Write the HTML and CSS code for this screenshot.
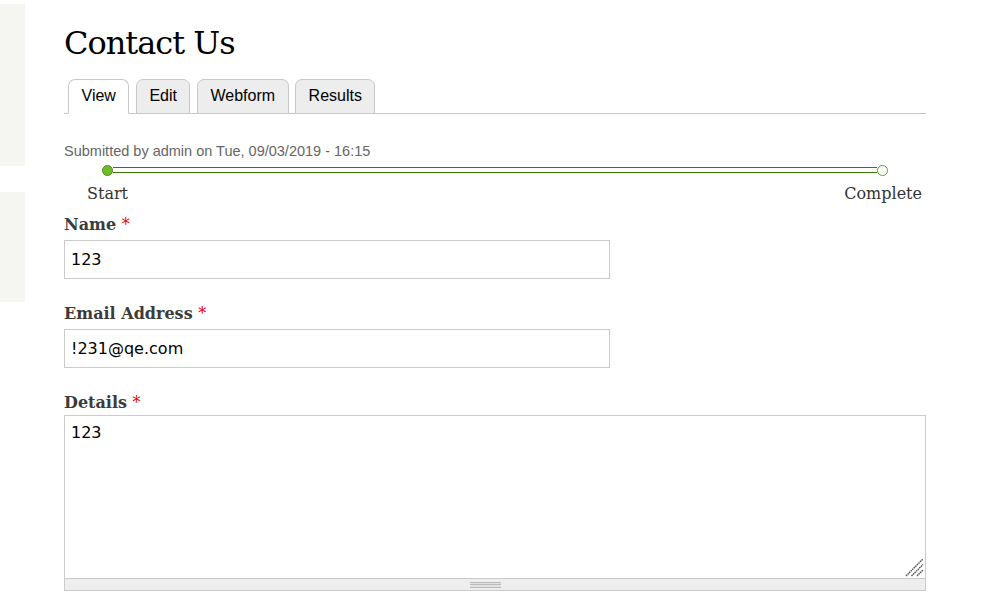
FILE: index.html
```html
<!DOCTYPE html>
<html lang="en">
<head>
<meta charset="utf-8">
<title>Contact Us</title>
<link rel="stylesheet" href="styles.css">
</head>
<body>
<div class="page">
  <aside class="sidebar">
    <div class="side-block side-block--top"></div>
    <div class="side-block side-block--bottom"></div>
  </aside>
  <main class="main">
    <h1 class="title">Contact Us</h1>
    <ul class="tabs">
      <li class="tab tab--active">View</li>
      <li class="tab">Edit</li>
      <li class="tab">Webform</li>
      <li class="tab">Results</li>
    </ul>
    <p class="submitted">Submitted by admin on Tue, 09/03/2019 - 16:15</p>
    <div class="progress">
      <div class="track">
        <span class="dot dot--done"></span>
        <span class="bar"></span>
        <span class="dot"></span>
      </div>
      <div class="steps">
        <span class="step step--start">Start</span>
        <span class="step step--end">Complete</span>
      </div>
    </div>
    <form class="form">
      <div class="field">
        <label class="label">Name <span class="req">*</span></label>
        <div class="input input--short">123</div>
      </div>
      <div class="field">
        <label class="label">Email Address <span class="req">*</span></label>
        <div class="input input--short">!231@qe.com</div>
      </div>
      <div class="field field--textarea">
        <label class="label">Details <span class="req">*</span></label>
        <div class="textarea-wrap">
          <div class="textarea">123
            <svg class="resizer" width="19" height="19" viewBox="0 0 19 19">
              <g stroke="#555" stroke-width="1.4" stroke-dasharray="1.6 0.6">
                <line x1="1" y1="18" x2="18" y2="1"/>
                <line x1="6.5" y1="18" x2="18" y2="6.5"/>
                <line x1="12" y1="18" x2="18" y2="12"/>
              </g>
            </svg>
          </div>
          <div class="grippie"><span class="grip"></span></div>
        </div>
      </div>
    </form>
  </main>
</div>
</body>
</html>
```
FILE: styles.css
```css
* { box-sizing: border-box; }
html, body { margin: 0; padding: 0; background: #fff; }
body { font-family: "DejaVu Serif", Georgia, serif; color: #222; }

.page { display: flex; }

.sidebar {
  width: 25px;
  flex: none;
  padding-top: 4px;
}
.side-block { background: #f5f5f2; }
.side-block--top { height: 162px; }
.side-block--bottom { height: 110px; margin-top: 26px; }

.main {
  margin-left: 39px;
  width: 862px;
}

.title {
  margin: 27px 0 0;
  font-family: "DejaVu Serif", Georgia, serif;
  font-weight: normal;
  font-size: 32px;
  line-height: 33px;
  letter-spacing: -1px;
  color: #000;
}

.tabs {
  list-style: none;
  margin: 19px 0 0;
  padding: 0 0 0 4px;
  display: flex;
  gap: 6.5px;
  height: 35px;
  border-bottom: 1px solid #c8c8c8;
}
.tab {
  height: 35px;
  padding: 0 12.5px;
  border: 1px solid #c8c8c8;
  border-radius: 7px 7px 0 0;
  background: #ededed;
  font-family: "Liberation Sans", Arial, sans-serif;
  font-size: 16px;
  line-height: 32px;
  color: #000;
}
.tab--active {
  background: #fff;
  border-bottom-color: #fff;
}

.submitted {
  margin: 27px 0 0;
  font-family: "Liberation Sans", Arial, sans-serif;
  font-size: 14.5px;
  line-height: 20px;
  color: #666;
}

.progress { margin-top: 4px; }
.track {
  display: flex;
  align-items: center;
  height: 10px;
  padding: 0 38px;
}
.dot {
  flex: none;
  width: 11px;
  height: 11px;
  border-radius: 50%;
  border: 1.5px solid #5f9a37;
  background: #fff;
}
.dot--done {
  background: #6dbb2a;
  border-color: #4e8c18;
}
.bar {
  flex: 1;
  height: 6px;
  border-top: 1.5px solid #3c7a00;
  border-bottom: 1.5px solid #3c7a00;
  background: #fff;
}
.steps {
  display: flex;
  justify-content: space-between;
  margin-top: 9px;
  padding: 0 4px 0 23px;
  font-size: 16px;
  line-height: 20px;
  color: #333;
}

.form { margin-top: 11px; }
.field { margin-bottom: 25px; }
.label {
  display: block;
  font-weight: bold;
  font-size: 16px;
  line-height: 20px;
  color: #3b3b3b;
  margin-bottom: 5px;
}
.req { color: #e00; font-weight: normal; }

.input {
  height: 39px;
  border: 1px solid #cbcbcb;
  padding: 0 6px;
  font-family: "DejaVu Sans", Verdana, sans-serif;
  font-size: 16px;
  line-height: 38px;
  color: #000;
}
.input--short { width: 546px; }

.field--textarea .label { margin-bottom: 2px; }
.textarea-wrap {
  border: 1px solid #cbcbcb;
}
.textarea {
  position: relative;
  height: 163px;
  padding: 7px 6px;
  font-family: "DejaVu Sans", Verdana, sans-serif;
  font-size: 16px;
  line-height: 20px;
  color: #000;
  border-bottom: 1px solid #cbcbcb;
}
.resizer {
  position: absolute;
  right: 1px;
  bottom: 1px;
}
.grippie {
  height: 11px;
  background: #eee;
  display: flex;
  justify-content: flex-start;
  align-items: center;
  padding-left: 405px;
}
.grip {
  width: 31px;
  height: 6px;
  border-top: 1px solid #bbb;
  border-bottom: 1px solid #bbb;
  background: linear-gradient(#bbb, #bbb) center / 100% 1px no-repeat, #e2e2e2;
}
```
